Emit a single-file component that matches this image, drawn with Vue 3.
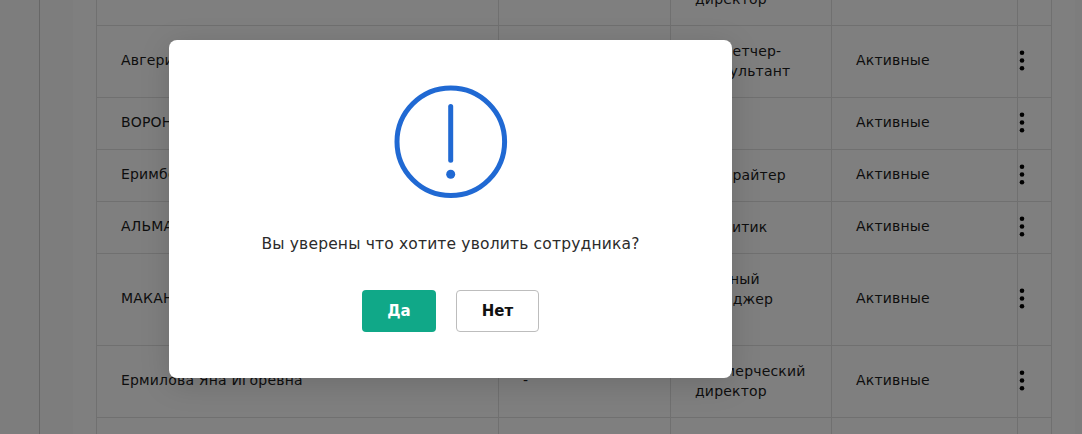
<script setup>
const rows = [
  { name: '', dash: '', role: 'Коммерческий директор', status: '', height: 72, dots: false },
  { name: 'Авгеринос Мария Петровна', dash: '', role: 'Диспетчер-консультант', status: 'Активные', height: 72, dots: true },
  { name: 'ВОРОНИНА ОЛЬГА', dash: '', role: '', status: 'Активные', height: 52, dots: true },
  { name: 'Еримбетова Дана', dash: '', role: 'Копирайтер', status: 'Активные', height: 52, dots: true },
  { name: 'АЛЬМАНОВА АЙГУЛЬ', dash: '', role: 'Аналитик', status: 'Активные', height: 52, dots: true },
  { name: 'МАКАНОВА ДИНА', dash: '', role: 'Главный\nменеджер\n\u00a0', status: 'Активные', height: 92, dots: true },
  { name: 'Ермилова Яна Игоревна', dash: '-', role: 'Коммерческий директор', status: 'Активные', height: 72, dots: true },
  { name: '', dash: '', role: '', status: '', height: 60, dots: false },
]
</script>

<template>
  <div class="page">
    <aside class="rail"></aside>
    <div class="gutter"></div>
    <div class="band"></div>
    <main class="table">
      <div
        v-for="(row, i) in rows"
        :key="i"
        class="row"
        :style="{ height: row.height + 'px' }"
      >
        <div class="cell name">{{ row.name }}</div>
        <div class="cell dash">{{ row.dash }}</div>
        <div class="cell role"><span>{{ row.role }}</span></div>
        <div class="cell status">{{ row.status }}</div>
        <div class="cell more">
          <svg v-if="row.dots" width="6" height="21" viewBox="0 0 6 21">
            <circle cx="3" cy="2.7" r="2.3" />
            <circle cx="3" cy="10.5" r="2.3" />
            <circle cx="3" cy="18.3" r="2.3" />
          </svg>
        </div>
      </div>
    </main>
    <div class="band"></div>
    <div class="edge"></div>

    <div class="overlay">
      <div class="modal">
        <svg class="warn" width="114" height="114" viewBox="0 0 114 114">
          <circle cx="56.8" cy="56.7" r="53.8" fill="none" stroke="#2069d3" stroke-width="5" />
          <line x1="56.7" y1="21.5" x2="56.7" y2="75.2" stroke="#2069d3" stroke-width="5" stroke-linecap="round" />
          <circle cx="56.7" cy="89.3" r="4.5" fill="#2069d3" />
        </svg>
        <p class="question">Вы уверены что хотите уволить сотрудника?</p>
        <div class="actions">
          <button type="button" class="btn yes">Да</button>
          <button type="button" class="btn no">Нет</button>
        </div>
      </div>
    </div>
  </div>
</template>

<style>
html, body {
  margin: 0;
  overflow: hidden;
}
</style>

<style scoped>
.page {
  position: relative;
  display: flex;
  width: 1082px;
  height: 434px;
  overflow: hidden;
  background: #fff;
  font-family: "DejaVu Sans", "Open Sans", sans-serif;
  color: #1c1c1c;
}

.rail {
  width: 40px;
  flex: none;
  border-right: 1px solid #cfcfcf;
  box-sizing: border-box;
  background: #fbfbfb;
}

.gutter {
  width: 33px;
  flex: none;
  background: #fbfbfb;
}

.band {
  width: 23px;
  flex: none;
  background: #fff;
}

.edge {
  flex: 1;
  background: #fbfbfb;
}

.table {
  width: 956px;
  flex: none;
  margin-top: -46px;
  border-left: 1px solid #e0e0e0;
  border-right: 1px solid #e0e0e0;
  box-sizing: border-box;
}

.row {
  display: grid;
  grid-template-columns: 402px 172px 161px 186px 1fr;
  border-bottom: 1px solid #e0e0e0;
  box-sizing: border-box;
  font-size: 14px;
  line-height: 20px;
  letter-spacing: 0.18px;
}

.cell {
  display: flex;
  align-items: center;
  padding: 0 24px;
  border-right: 1px solid #e0e0e0;
  box-sizing: border-box;
}

.name,
.dash,
.status {
  padding-bottom: 4px;
}

.role {
  padding-bottom: 2px;
}

.role span {
  white-space: pre-line;
}

.cell:last-child {
  border-right: none;
  padding: 0 0 2px 1px;
}

.more svg {
  fill: #000;
}

.overlay {
  position: absolute;
  inset: 0;
  background: rgba(0, 0, 0, 0.5);
  display: flex;
  align-items: flex-start;
  padding: 40px 0 0 169px;
  box-sizing: border-box;
}

.modal {
  width: 563px;
  height: 338px;
  background: #fff;
  border-radius: 8px;
  box-shadow: 0 6px 30px rgba(0, 0, 0, 0.15);
  display: flex;
  flex-direction: column;
  align-items: center;
  padding-top: 45px;
  box-sizing: border-box;
}

.warn {
  display: block;
}

.question {
  margin: 34px 0 0;
  font-size: 15.5px;
  line-height: 22px;
  letter-spacing: 0.17px;
  color: #2b2b2b;
}

.actions {
  display: flex;
  gap: 20px;
  margin-top: 35px;
}

.btn {
  height: 42px;
  border-radius: 4px;
  font-family: inherit;
  font-size: 15px;
  font-weight: 700;
  cursor: pointer;
}

.yes {
  width: 74px;
  background: #10a888;
  border: none;
  color: #fff;
}

.no {
  width: 83px;
  background: #fff;
  border: 1px solid #bdbdbd;
  color: #111;
}
</style>
